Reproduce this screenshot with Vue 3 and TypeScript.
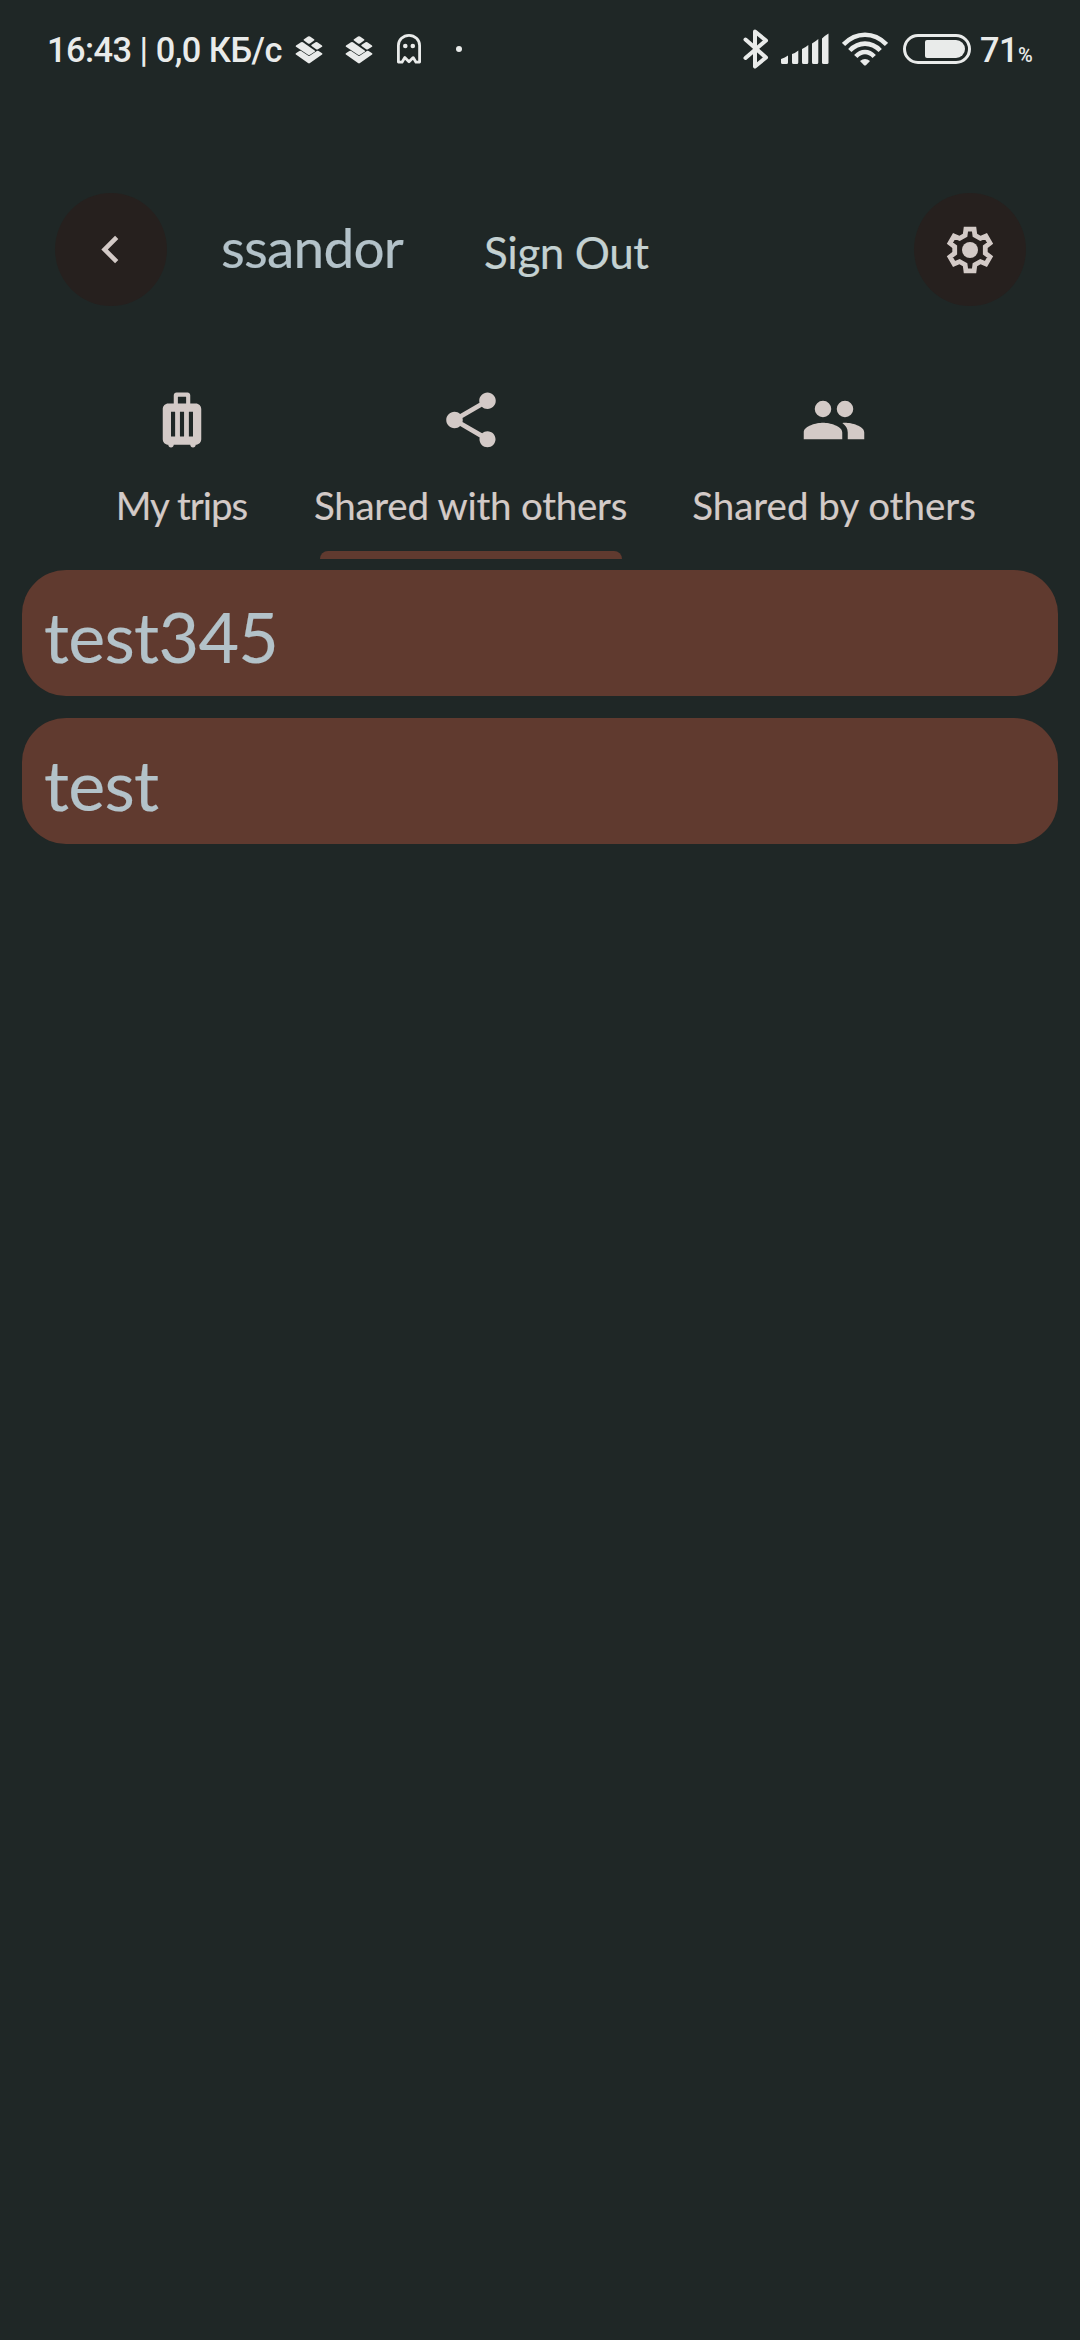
<script setup lang="ts">
interface Tab {
  id: string
  label: string
  icon: string
  active: boolean
}

const tabs: Tab[] = [
  {
    id: 'mine',
    label: 'My trips',
    icon: 'M17 6h-2V3c0-.55-.45-1-1-1h-4c-.55 0-1 .45-1 1v3H7c-1.100 0-2 .9-2 2v11c0 1.100.9 2 2 2 0 .55.45 1 1 1s1-.45 1-1h6c0 .55.45 1 1 1s1-.45 1-1c1.100 0 2-.9 2-2V8c0-1.100-.9-2-2-2zM9.500 18H8V9h1.500v9zm3.250 0h-1.500V9h1.500v9zm.75-12h-3V3.500h3V6zM16 18h-1.500V9H16v9z',
    active: false,
  },
  {
    id: 'with',
    label: 'Shared with others',
    icon: 'M18 16.080c-.76 0-1.440.3-1.960.77L8.910 12.700c.05-.23.09-.46.09-.7s-.04-.47-.09-.7l7.050-4.110c.54.5 1.250.81 2.040.81 1.660 0 3-1.340 3-3s-1.340-3-3-3-3 1.340-3 3c0 .24.04.47.09.7L8.040 9.810C7.500 9.310 6.790 9 6 9c-1.660 0-3 1.340-3 3s1.340 3 3 3c.79 0 1.500-.31 2.040-.81l7.120 4.160c-.05.21-.08.43-.08.65 0 1.610 1.310 2.920 2.920 2.920s2.920-1.310 2.920-2.920-1.310-2.920-2.920-2.920z',
    active: true,
  },
  {
    id: 'by',
    label: 'Shared by others',
    icon: 'M8 5a3 3 0 1 0 0 6 3 3 0 0 0 0-6zM16 5a3 3 0 1 0 0 6 3 3 0 0 0 0-6zM8 13c-2.330 0-7 1.170-7 3.500V19h14v-2.500c0-2.330-4.670-3.500-7-3.500zM16 13c-.29 0-.62.02-.97.05 1.160.84 1.970 1.970 1.970 3.450V19h6v-2.500c0-2.330-4.670-3.500-7-3.500z',
    active: false,
  },
]

const trips: string[] = ['test345', 'test']

// Six-tooth cog outline: [radius, angle] pairs of one tooth, repeated every 60 degrees.
const tooth: [number, number][] = [[24, -15], [24, 15], [17.8, 23.5], [17.8, 36.5]]
const gear: string = Array.from({ length: 6 }, (_, i) =>
  tooth.map(([r, a]) => {
    const t = ((a + i * 60) * Math.PI) / 180
    return `${(r * Math.sin(t)).toFixed(2)},${(-r * Math.cos(t)).toFixed(2)}`
  }).join(' '),
).join(' ')
</script>

<template>
  <div class="screen">
    <div class="status">
      <span class="clock">16:43 | 0,0 КБ/с</span>
      <svg v-for="n in 2" :key="n" class="layers" viewBox="0 0 28 28">
        <g fill="#e9ebea">
          <path d="M13 .6q1-.7 2 0l4 2.700q.8.7 0 1.300l-4 2.900q-1 .7-2 0L9 4.600q-.8-.6 0-1.300z" />
          <path d="M20.500 6.300q.9-.6 1.800 0l4.700 3.100q.8.7 0 1.300l-4 2.600q-1 .6-1.900 0l-4.500-3.200q-.8-.7 0-1.300z" />
          <path d="M6 6.300q1-.6 1.900 0l11.800 8.100q.8.700 0 1.300L15 18.700q-1 .6-2 0L1 10.700q-.8-.7 0-1.300z" />
          <path d="M.9 17.200l3.500-2.300q.9-.5 1.800 0l6.800 4.700q1 .6 2 0l6.800-4.700q.9-.5 1.800 0l3.500 2.300q.8.700 0 1.300L15 27.100q-1 .7-2 0L.9 18.500q-.8-.6 0-1.300z" />
        </g>
      </svg>
      <svg class="ghost" viewBox="0 0 24 30">
        <path d="M1.400 28V11.500a10.600 10.100 0 0 1 21.200 0V28L19 28.200l-2.800-4.600-4.200 4.200-4.200-4.200L5 28.200z" fill="none" stroke="#e9ebea" stroke-width="2.800" stroke-linejoin="round" />
        <circle cx="8.300" cy="12" r="2.300" fill="#e9ebea" />
        <circle cx="15.800" cy="12" r="2.300" fill="#e9ebea" />
      </svg>
      <span class="dot"></span>
      <svg class="bt" viewBox="0 0 26 40">
        <path d="M2.500 10.500L23 28.500 12 37.500V2.500L23 11.500 2.500 29" fill="none" stroke="#e9ebea" stroke-width="4" stroke-linejoin="round" stroke-linecap="round" />
      </svg>
      <svg class="signal" viewBox="0 0 48 32">
        <g fill="#e9ebea">
          <path d="M0 26q4-1.500 7-3.500v7q0 1.500-1.500 1.500h-4Q0 31 0 29.500z" />
          <path d="M11 21q3.500-1 6.300-3.500v12q0 1.500-1.500 1.500h-3.300q-1.500 0-1.500-1.500z" />
          <path d="M21 16q3.500-1.500 6.300-4v17.500q0 1.500-1.500 1.500h-3.300q-1.500 0-1.500-1.500z" />
          <path d="M31 10.500q3.500-2 6.300-4.500v23.500q0 1.500-1.500 1.500h-3.300q-1.500 0-1.500-1.500z" />
          <path d="M41 5.500Q44 2.500 47.500.500v29q0 1.500-1.500 1.500h-3.500q-1.500 0-1.500-1.500z" />
        </g>
      </svg>
      <svg class="wifi" viewBox="0 0 46 34">
        <g fill="none" stroke="#e9ebea" stroke-width="4.600">
          <path d="M1.500 12.500Q11 2.800 23 2.800t21.500 9.700" />
          <path d="M7.800 18.500Q14.500 11.600 23 11.600t15.200 6.900" />
          <path d="M13.800 24.500Q18 20 23 20t9.200 4.500" />
        </g>
        <path d="M18 29q5-4 10 0l-3.800 4q-1.200 1-2.400 0z" fill="#e9ebea" />
      </svg>
      <div class="battery"><span class="charge"></span></div>
      <span class="level">71</span><span class="pct">%</span>
    </div>

    <header class="header">
      <button class="round back" aria-label="Back">
        <svg width="55" height="55" viewBox="0 0 24 24"><path fill="#d3cac7" d="M15.410 16.590 10.830 12l4.580-4.590L14 6l-6 6 6 6z" /></svg>
      </button>
      <span class="user">ssandor</span>
      <a class="signout">Sign Out</a>
      <button class="round settings" aria-label="Settings">
        <svg width="50" height="50" viewBox="-25 -25 50 50">
          <clipPath id="gear-shape"><polygon :points="gear" /></clipPath>
          <polygon :points="gear" clip-path="url(#gear-shape)" fill="none" stroke="#d3cac7" stroke-width="9.600" />
          <circle r="8" fill="#d3cac7" />
        </svg>
      </button>
    </header>

    <nav class="tabs">
      <div v-for="tab in tabs" :key="tab.id" class="tab" :class="[tab.id, { active: tab.active }]">
        <svg width="66" height="66" viewBox="0 0 24 24"><path fill="#d3cac7" :d="tab.icon" /></svg>
        <span class="label">{{ tab.label }}</span>
        <span v-if="tab.active" class="bar"></span>
      </div>
    </nav>

    <main class="list">
      <div v-for="trip in trips" :key="trip" class="card">{{ trip }}</div>
    </main>
  </div>
</template>

<style>
body { background: #1f2726; }
</style>

<style scoped>
.screen { width: 1080px; height: 2340px; overflow: hidden; background: #1f2726; font-family: Lato, "Open Sans", sans-serif; display: flex; flex-direction: column; -webkit-text-stroke: 0.01em; }
svg { display: block; flex: none; }

.status { height: 98px; display: flex; align-items: center; padding-left: 47px; color: #e9ebea; font-family: Roboto, sans-serif; font-size: 34.400px; font-weight: 500; line-height: 98px; flex: none; white-space: nowrap; -webkit-text-stroke: 0; }
.clock { width: 248px; letter-spacing: -0.530px; padding-top: 2px; }
.layers { width: 28px; height: 28px; margin: 2px 22px 0 0; }
.ghost { width: 24px; height: 30px; margin: 0 35px 0 2px; }
.dot { width: 6px; height: 6px; border-radius: 50%; background: #e9ebea; margin-right: 281px; }
.bt { width: 26px; height: 40px; margin-right: 12px; }
.signal { width: 48px; height: 32px; margin-right: 13px; }
.wifi { width: 46px; height: 34px; margin-right: 15px; }
.battery { width: 68px; height: 30px; box-sizing: border-box; border: 3px solid #e9ebea; border-radius: 15px; display: flex; justify-content: flex-end; padding: 3px; margin-right: 9px; flex: none; }
.charge { width: 40px; height: 18px; background: #e9ebea; border-radius: 2px 9px 9px 2px; }
.level { padding-top: 2px; letter-spacing: -0.500px; }
.pct { font-size: 20px; padding-top: 11px; line-height: 98px; }

.header { margin-top: 95px; height: 113px; padding: 0 54px 0 55px; display: flex; align-items: center; flex: none; white-space: nowrap; }
.round { width: 112px; height: 113px; border: 0; padding: 0; border-radius: 50%; background: #26201e; display: flex; align-items: center; justify-content: center; flex: none; }
.back { padding-right: 1px; }
.user { font-size: 55px; line-height: 66px; letter-spacing: -0.800px; color: #b3c2c9; margin-left: 54px; padding-bottom: 5px; }
.signout { font-size: 44px; line-height: 54px; letter-spacing: -0.450px; color: #c4d1d1; margin-left: 81px; padding-top: 4px; }
.settings { margin-left: auto; padding-right: 1px; }

.tabs { height: 264px; flex: none; display: grid; grid-template-columns: 221px 357px 370px; box-sizing: border-box; padding: 81px 0 0 71px; }
.tab { display: flex; flex-direction: column; align-items: center; color: #d3cac7; }
.label { font-size: 38.500px; line-height: 48px; letter-spacing: -0.250px; margin-top: 28px; white-space: nowrap; }
.mine .label { letter-spacing: -1px; }
.by .label { letter-spacing: 0; }
.bar { width: 302px; height: 8px; border-radius: 8px 8px 0 0; margin-top: 22px; background: #603a2f; }

.list { display: flex; flex-direction: column; gap: 22px; padding: 0 22px; }
.card { height: 126px; border-radius: 44px; background: #603a2f; color: #b3c2c9; font-size: 70px; line-height: 132px; letter-spacing: -0.700px; padding-left: 22px; }
</style>
